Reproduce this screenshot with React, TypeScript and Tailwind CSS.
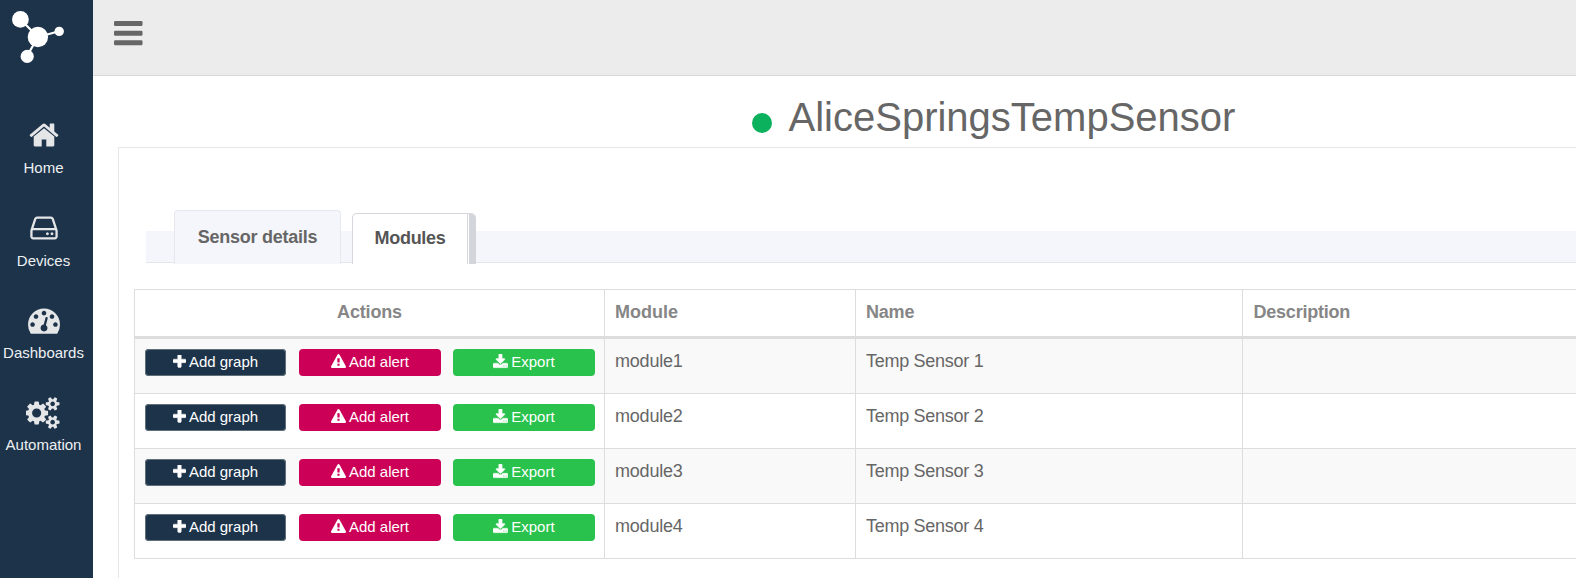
import React from "react";

const PATHS = {
  home: "M1472 992v480q0 26-19 45t-45 19h-384v-384h-256v384h-384q-26 0-45-19t-19-45v-480q0-1 .5-3t.5-3l575-474 575 474q1 2 1 6zm223-69l-62 74q-8 9-21 11h-3q-13 0-21-7l-692-577-692 577q-12 8-24 7-13-2-21-11l-62-74q-8-10-7-23.5t11-21.5l719-599q32-26 76-26t76 26l244 204v-195q0-14 9-23t23-9h192q14 0 23 9t9 23v408l219 182q10 8 11 21.5t-7 23.5z",
  drive: "M1168 1216q0 33-23.5 56.5t-56.5 23.5-56.5-23.5-23.5-56.5 23.5-56.5 56.5-23.5 56.5 23.5 23.5 56.5zm256 0q0 33-23.5 56.5t-56.5 23.5-56.5-23.5-23.5-56.5 23.5-56.5 56.5-23.5 56.5 23.5 23.5 56.5zm112 160v-320q0-13-9.5-22.5t-22.5-9.5h-1216q-13 0-22.5 9.5t-9.5 22.5v320q0 13 9.5 22.5t22.5 9.5h1216q13 0 22.5-9.5t9.5-22.5zm-1230-480h1180l-157-482q-4-13-16-21.5t-26-8.5h-782q-14 0-26 8.5t-16 21.5zm1358 160v320q0 66-47 113t-113 47h-1216q-66 0-113-47t-47-113v-320q0-25 16-75l197-606q17-53 63-86t101-33h782q55 0 101 33t63 86l197 606q16 50 16 75z",
  gauge: "M384 1152q0-53-37.5-90.5t-90.5-37.5-90.5 37.5-37.5 90.5 37.5 90.5 90.5 37.5 90.5-37.5 37.5-90.5zm192-448q0-53-37.5-90.5t-90.5-37.5-90.5 37.5-37.5 90.5 37.5 90.5 90.5 37.5 90.5-37.5 37.5-90.5zm428 481l101-382q6-26-7.5-48.5t-38.5-29.5-48 6.5-30 39.5l-101 382q-60 5-107 43.5t-63 98.5q-20 77 20 146t117 89 146-20 89-117q16-60-6-117t-72-91zm660-33q0-53-37.5-90.5t-90.5-37.5-90.5 37.5-37.5 90.5 37.5 90.5 90.5 37.5 90.5-37.5 37.5-90.5zm-640-640q0-53-37.5-90.5t-90.5-37.5-90.5 37.5-37.5 90.5 37.5 90.5 90.5 37.5 90.5-37.5 37.5-90.5zm448 192q0-53-37.5-90.5t-90.5-37.5-90.5 37.5-37.5 90.5 37.5 90.5 90.5 37.5 90.5-37.5 37.5-90.5zm320 448q0 261-141 483-19 29-54 29h-1402q-35 0-54-29-141-221-141-483 0-182 71-348t191-286 286-191 348-71 348 71 286 191 191 286 71 348z",
  cogs: "M832 896q0-106-75-181t-181-75-181 75-75 181 75 181 181 75 181-75 75-181zm768 512q0-52-38-90t-90-38-90 38-38 90q0 53 37.5 90.5t90.5 37.5 90.5-37.5 37.5-90.5zm0-1024q0-52-38-90t-90-38-90 38-38 90q0 53 37.5 90.5t90.5 37.5 90.5-37.5 37.5-90.5zm-384 421v185q0 10-7 19.5t-16 10.5l-155 24q-11 35-32 76 34 48 90 115 7 11 7 20 0 12-7 19-23 30-82.5 89.5t-78.5 59.5q-11 0-21-7l-115-90q-37 19-77 31-11 108-23 155-7 24-30 24h-186q-11 0-20-7.5t-10-17.5l-23-153q-34-10-75-31l-118 89q-7 7-20 7-11 0-21-8-144-133-144-160 0-9 7-19 10-14 41-53t47-61q-23-44-35-82l-152-24q-10-1-17-9.5t-7-19.5v-185q0-10 7-19.5t16-10.5l155-24q11-35 32-76-34-48-90-115-7-11-7-20 0-12 7-20 22-30 82-89t79-59q11 0 21 7l115 90q34-18 77-32 11-108 23-154 7-24 30-24h186q11 0 20 7.5t10 17.5l23 153q34 10 75 31l118-89q8-7 20-7 11 0 21 8 144 133 144 160 0 8-7 19-12 16-42 54t-45 60q23 48 34 82l152 23q10 2 17 10.5t7 19.5zm640 533v140q0 16-149 31-12 27-30 52 51 113 51 138 0 4-4 7-122 71-124 71-8 0-46-47t-52-68q-20 2-30 2t-30-2q-14 21-52 68t-46 47q-2 0-124-71-4-3-4-7 0-25 51-138-18-25-30-52-149-15-149-31v-140q0-16 149-31 13-29 30-52-51-113-51-138 0-4 4-7 4-2 35-20t59-34 30-16q8 0 46 46.5t52 67.5q20-2 30-2t30 2q51-71 92-112l6-2q4 0 124 70 4 3 4 7 0 25-51 138 17 23 30 52 149 15 149 31zm0-1024v140q0 16-149 31-12 27-30 52 51 113 51 138 0 4-4 7-122 71-124 71-8 0-46-47t-52-68q-20 2-30 2t-30-2q-14 21-52 68t-46 47q-2 0-124-71-4-3-4-7 0-25 51-138-18-25-30-52-149-15-149-31v-140q0-16 149-31 13-29 30-52-51-113-51-138 0-4 4-7 4-2 35-20t59-34 30-16q8 0 46 46.5t52 67.5q20-2 30-2t30 2q51-71 92-112l6-2q4 0 124 70 4 3 4 7 0 25-51 138 17 23 30 52 149 15 149 31z",
  plus: "M1600 736v192q0 40-28 68t-68 28h-416v416q0 40-28 68t-68 28h-192q-40 0-68-28t-28-68v-416h-416q-40 0-68-28t-28-68v-192q0-40 28-68t68-28h416v-416q0-40 28-68t68-28h192q40 0 68 28t28 68v416h416q40 0 68 28t28 68z",
  warning: "M1024 1375v-190q0-14-9.5-23.5t-22.5-9.5h-192q-13 0-22.5 9.5t-9.5 23.5v190q0 14 9.5 23.5t22.5 9.5h192q13 0 22.5-9.5t9.5-23.5zm-2-374l18-459q0-12-10-19-13-11-24-11h-220q-11 0-24 11-10 7-10 21l17 457q0 10 10 16.5t24 6.5h185q14 0 23.5-6.5t10.5-16.5zm-14-934l768 1408q35 63-2 126-17 29-46.5 46t-63.5 17h-1536q-34 0-63.5-17t-46.5-46q-37-63-2-126l768-1408q17-31 47-49t65-18 65 18 47 49z",
  download: "M1344 1344q0-26-19-45t-45-19-45 19-19 45 19 45 45 19 45-19 19-45zm256 0q0-26-19-45t-45-19-45 19-19 45 19 45 45 19 45-19 19-45zm128-224v320q0 40-28 68t-68 28h-1472q-40 0-68-28t-28-68v-320q0-40 28-68t68-28h465l135 136q58 56 136 56t136-56l136-136h464q40 0 68 28t28 68zm-325-569q17 41-14 70l-448 448q-18 19-45 19t-45-19l-448-448q-31-29-14-70 17-39 59-39h256v-448q0-26 19-45t45-19h256q26 0 45 19t19 45v448h256q42 0 59 39z",
};

const NAV: { label: string; icon: string; viewBox: string; size: string }[] = [
  { label: "Home", icon: PATHS.home, viewBox: "0 0 1792 1792", size: "w-8" },
  { label: "Devices", icon: PATHS.drive, viewBox: "0 0 1792 1792", size: "w-8" },
  { label: "Dashboards", icon: PATHS.gauge, viewBox: "0 0 1792 1792", size: "w-8" },
  { label: "Automation", icon: PATHS.cogs, viewBox: "0 0 1920 1792", size: "w-[35px]" },
];

const MODULES = [
  { id: "module1", name: "Temp Sensor 1" },
  { id: "module2", name: "Temp Sensor 2" },
  { id: "module3", name: "Temp Sensor 3" },
  { id: "module4", name: "Temp Sensor 4" },
];

function Logo() {
  return (
    <svg className="ml-3 mt-[11px] block h-[53px] w-[53px] shrink-0" viewBox="12 11 53 53" fill="#fff">
      <path d="M20.5 19.5L38 37L59 31.3M38 37L27 56" stroke="#fff" strokeWidth="2.2" fill="none" />
      <circle cx="20.4" cy="19.4" r="8.4" />
      <circle cx="37.9" cy="37" r="10.2" />
      <circle cx="59.2" cy="31.4" r="4.7" />
      <circle cx="27.2" cy="56.4" r="6.6" />
    </svg>
  );
}

function Sidebar() {
  return (
    <nav className="flex h-full w-[93px] shrink-0 flex-col bg-[#1c334a]">
      <Logo />
      <ul className="mt-[55.4px] w-[87px]">
        {NAV.map((item) => (
          <li key={item.label} className="flex h-[92.4px] flex-col items-center">
            <svg className={`h-8 shrink-0 ${item.size}`} viewBox={item.viewBox} fill="#e4e6e8">
              <path d={item.icon} />
            </svg>
            <span className="mt-[6.9px] text-[15px] leading-5 text-[#eef0f2]">{item.label}</span>
          </li>
        ))}
      </ul>
    </nav>
  );
}

function ActionButton({
  icon,
  viewBox,
  iconClass,
  className,
  children,
}: {
  icon: string;
  viewBox: string;
  iconClass: string;
  className: string;
  children: React.ReactNode;
}) {
  return (
    <button className={`flex h-[27px] items-start justify-center rounded-[4px] pt-[3px] text-[15px] leading-5 text-white ${className}`}>
      <svg className={`mr-[3px] shrink-0 ${iconClass}`} viewBox={viewBox} fill="#fff">
        <path d={icon} />
      </svg>
      {children}
    </button>
  );
}

function RowActions() {
  return (
    <div className="flex pl-[10px]">
      <ActionButton
        icon={PATHS.plus}
        viewBox="192 192 1408 1408"
        iconClass="mt-[3px] h-[13px] w-[13px] stroke-white stroke-[50]"
        className="w-[141px] mr-[13px] bg-[#1c334a] shadow-[inset_0_0_0_1px_#5f7079]"
      >
        Add graph
      </ActionButton>
      <ActionButton
        icon={PATHS.warning}
        viewBox="0 0 1792 1792"
        iconClass="mt-[2px] h-[15px] w-[15px]"
        className="w-[142px] mr-3 bg-[#cc0057]"
      >
        Add alert
      </ActionButton>
      <ActionButton
        icon={PATHS.download}
        viewBox="64 0 1664 1792"
        iconClass="mt-[2px] h-[16px] w-[14.9px] stroke-white stroke-[40]"
        className="w-[142px] bg-[#28c24c]"
      >
        Export
      </ActionButton>
    </div>
  );
}

function ModulesTable() {
  const columns = "grid grid-cols-[470px_251px_387px_1fr]";
  return (
    <div className="ml-[15px] mt-[25px] border-l border-t border-[#ddd]">
      <div className={`${columns} h-[49px] border-b-[3px] border-[#ddd] text-lg font-bold leading-[26px] text-[#868686]`}>
        <div className="border-r border-[#ddd] pt-[9px] text-center tracking-[-0.16px]">Actions</div>
        <div className="border-r border-[#ddd] pl-[10px] pt-[9px]">Module</div>
        <div className="border-r border-[#ddd] pl-[10px] pt-[9px] tracking-[-0.2px]">Name</div>
        <div className="pl-[10.5px] pt-[9px] tracking-[-0.22px]">Description</div>
      </div>
      {MODULES.map((m) => (
        <div
          key={m.id}
          className={`${columns} h-[55px] border-b border-[#ddd] text-lg leading-[26px] text-[#666] odd:bg-white even:bg-[#f9f9f9]`}
        >
          <div className="border-r border-[#ddd] pt-[10px]">
            <RowActions />
          </div>
          <div className="border-r border-[#ddd] pl-[10px] pt-[9px] tracking-[-0.2px]">{m.id}</div>
          <div className="border-r border-[#ddd] pl-[10px] pt-[9px] tracking-[-0.28px]">{m.name}</div>
          <div />
        </div>
      ))}
    </div>
  );
}

function Tabs() {
  return (
    <div className="ml-[27px] mt-[62px] flex h-[54px] items-end">
      <div className="mb-[1px] h-8 w-7 border-b border-[#e3e5ea] bg-[#f5f6fb]" />
      <div className="h-[54px] w-[167px] rounded-t-[4px] border border-b-0 border-[#e6e8ee] bg-[#f5f6fb] pt-[13px] text-center text-lg font-bold leading-[26px] tracking-[-0.24px] text-[#666]">
        Sensor details
      </div>
      <div className="mb-[1px] h-8 w-[11px] border-b border-[#e3e5ea] bg-[#f5f6fb]" />
      <div className="flex h-[51px] w-[124px] overflow-hidden rounded-t-[5px] border border-r-0 border-b-0 border-[#d5d7dc] bg-white text-lg font-bold leading-[26px] text-[#555]">
        <div className="w-[115px] shrink-0 border-r border-[#d5d7dc] pt-[11px] text-center tracking-[-0.3px]">Modules</div>
        <div className="ml-px flex-1 bg-[#d3d5db]" />
      </div>
      <div className="mb-[1px] h-8 flex-1 border-b border-[#e3e5ea] bg-[#f5f6fb]" />
    </div>
  );
}

export default function App() {
  return (
    <div className="flex h-[578px] w-full overflow-hidden bg-white font-['Liberation_Sans',Arial,sans-serif]">
      <Sidebar />
      <div className="flex min-w-0 flex-1 flex-col">
        <header className="h-[76px] shrink-0 border-b border-[#d8d8d8] bg-[#ececec] pl-[21px] pt-[21px]">
          <svg className="block h-[25px] w-[29px]" viewBox="0 0 29 25" fill="#666">
            <rect width="28.5" height="5" rx="1.2" />
            <rect y="9.8" width="28.5" height="5" rx="1.2" />
            <rect y="19.2" width="28.5" height="5" rx="1.2" />
          </svg>
        </header>
        <div className="flex h-[71px] shrink-0 items-start pl-[658.5px]">
          <span className="mt-[36.5px] h-5 w-5 shrink-0 rounded-full bg-[#0bb15d]" />
          <h1 className="ml-[17px] mt-[17px] text-[40px] leading-[48px] text-[#666]">AliceSpringsTempSensor</h1>
        </div>
        <main className="ml-[25px] flex-1 border-l border-t border-[#e7e7e7]">
          <Tabs />
          <ModulesTable />
        </main>
      </div>
    </div>
  );
}
